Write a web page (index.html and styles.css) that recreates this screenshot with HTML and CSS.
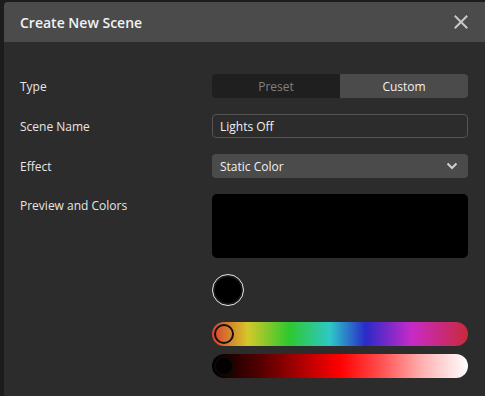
FILE: index.html
```html
<!DOCTYPE html>
<html>
<head>
<meta charset="utf-8">
<link rel="stylesheet" href="styles.css">
</head>
<body>
<div class="dialog">
  <div class="header">
    <span class="title">Create New Scene</span>
    <svg class="close" width="14" height="14" viewBox="0 0 14 14"><path d="M1.5 1.5 L12.5 12.5 M12.5 1.5 L1.5 12.5" stroke="#c8c8c8" stroke-width="2" stroke-linecap="square"/></svg>
  </div>
  <div class="body">
    <div class="row">
      <div class="label">Type</div>
      <div class="seg">
        <div class="seg-item">Preset</div>
        <div class="seg-item active">Custom</div>
      </div>
    </div>
    <div class="row">
      <div class="label">Scene Name</div>
      <div class="input">Lights Off</div>
    </div>
    <div class="row">
      <div class="label">Effect</div>
      <div class="select">
        <span>Static Color</span>
        <svg width="12" height="8" viewBox="0 0 12 8"><path d="M1.5 1.5 L6 6 L10.5 1.5" fill="none" stroke="#cfcfcf" stroke-width="2"/></svg>
      </div>
    </div>
    <div class="row top">
      <div class="label">Preview and Colors</div>
      <div class="colors">
        <div class="preview"></div>
        <div class="swatch"><div class="swatch-inner"></div></div>
        <div class="bar hue"><div class="thumb"></div></div>
        <div class="bar bright"><div class="thumb dark"></div></div>
      </div>
    </div>
  </div>
</div>
</body>
</html>
```
FILE: styles.css
```css
html, body {
  margin: 0;
  padding: 0;
  background: #1c1c1a;
  height: 396px;
  overflow: hidden;
  font-family: "Open Sans", "Noto Sans", sans-serif;
}
.dialog {
  margin: 2px 0 0 4px;
  height: 394px;
  background: #2c2c2c;
  border-top-left-radius: 4px;
  overflow: hidden;
}
.header {
  height: 40px;
  background: #4b4b4b;
  display: flex;
  align-items: center;
  justify-content: space-between;
  padding: 0 17px 0 16px;
}
.title {
  color: #f2f2f2;
  font-size: 14px;
  font-weight: 600;
}
.close {
  display: block;
}
.body {
  padding: 32px 17px 0 16px;
  display: flex;
  flex-direction: column;
  gap: 16px;
}
.row {
  display: flex;
  align-items: center;
}
.row.top {
  align-items: flex-start;
}
.label {
  width: 192px;
  color: #e6e6e6;
  font-size: 12px;
}
.row.top .label {
  line-height: 24px;
}
.seg {
  width: 256px;
  height: 24px;
  display: flex;
  border-radius: 4px;
  overflow: hidden;
  background: #1f1f1f;
}
.seg-item {
  flex: 1;
  display: flex;
  align-items: center;
  justify-content: center;
  font-size: 12px;
  color: #808080;
}
.seg-item.active {
  background: #4b4b4b;
  color: #f0f0f0;
}
.input {
  width: 256px;
  height: 24px;
  box-sizing: border-box;
  border: 1px solid #555;
  border-radius: 4px;
  padding: 0 7px;
  display: flex;
  align-items: center;
  color: #f0f0f0;
  font-size: 12px;
}
.select {
  width: 256px;
  height: 24px;
  box-sizing: border-box;
  background: #4b4b4b;
  border-radius: 4px;
  padding: 0 10px 0 8px;
  display: flex;
  align-items: center;
  justify-content: space-between;
  color: #f0f0f0;
  font-size: 12px;
}
.select svg {
  display: block;
}
.colors {
  width: 256px;
  display: flex;
  flex-direction: column;
}
.preview {
  height: 64px;
  background: #000;
  border-radius: 5px;
}
.swatch {
  margin-top: 16px;
  width: 32px;
  height: 32px;
  box-sizing: border-box;
  border: 1.5px solid #e8e8e8;
  border-radius: 50%;
  padding: 2px;
  background: #1a1a1a;
}
.swatch-inner {
  width: 100%;
  height: 100%;
  border-radius: 50%;
  background: #000;
}
.bar {
  position: relative;
  height: 24px;
  border-radius: 12px;
}
.hue {
  margin-top: 16px;
  background: linear-gradient(to right, #d8402e 0%, #d4c82a 14%, #2ec82e 30%, #2ec8c8 46%, #2a2ac8 60%, #c82ac8 78%, #c82a3a 100%);
}
.bright {
  margin-top: 8px;
  background: linear-gradient(to right, #000 0%, #5a0000 20%, #c00000 38%, #ff0000 50%, #ff5050 66%, #ffb0b0 82%, #fff 100%);
}
.thumb {
  position: absolute;
  left: 2px;
  top: 2px;
  width: 20px;
  height: 20px;
  box-sizing: border-box;
  border: 2px solid #111;
  border-radius: 50%;
}
.thumb.dark {
  border-color: #0a0a0a;
  background: #050000;
}
```
